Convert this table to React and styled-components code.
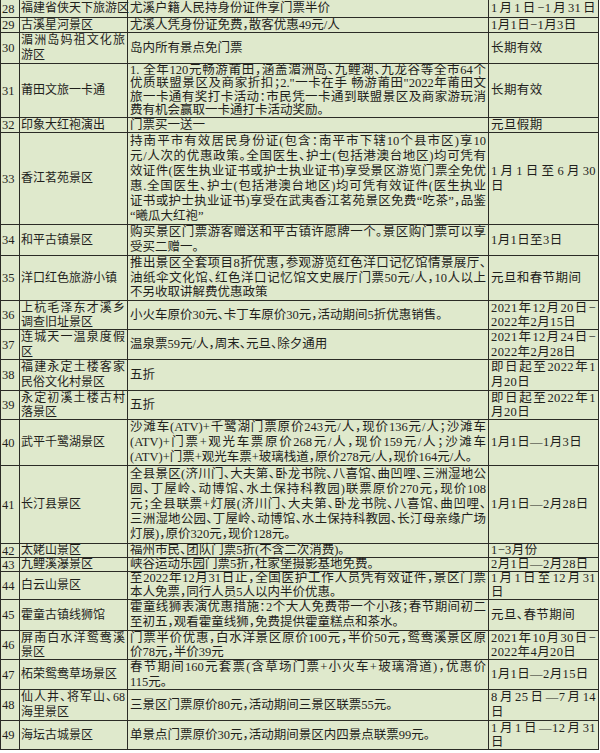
import React from "react";
import styled, { createGlobalStyle } from "styled-components";

const GlobalStyle = createGlobalStyle`
  body {
    margin: 0;
    background: #ffffff;
  }
`;

const rows = [
  { no: 28, h: 18, name: ["福建省侠天下旅游区"], info: ["尤溪户籍人民持身份证件享门票半价"], date: ["1月1日−1月31日"], fillDate: true },
  { no: 29, h: 15, name: ["古溪星河景区"], info: ["尤溪人凭身份证免费，散客优惠49元/人"], date: ["1月1日−1月3日"] },
  { no: 30, h: 31, name: ["湄洲岛妈祖文化旅", "游区"], info: ["岛内所有景点免门票"], date: ["长期有效"] },
  {
    no: 31, h: 54, name: ["莆田文旅一卡通"],
    info: [
      "1. 全年120元畅游莆田，涵盖湄洲岛、九鲤湖、九龙谷等全市64个",
      "优质联盟景区及商家折扣；2.\"一卡在手 畅游莆田\"2022年莆田文",
      "旅一卡通有奖打卡活动：市民凭一卡通到联盟景区及商家游玩消",
      "费有机会赢取一卡通打卡活动奖励。",
    ],
    date: ["长期有效"],
  },
  { no: 32, h: 15, name: ["印象大红袍演出"], info: ["门票买一送一"], date: ["元旦假期"] },
  {
    no: 33, h: 92, name: ["香江茗苑景区"],
    info: [
      "持南平市有效居民身份证(包含：南平市下辖10个县市区)享10",
      "元/人次的优惠政策。全国医生、护士(包括港澳台地区)均可凭有",
      "效证件(医生执业证书或护士执业证书)享受景区游览门票全免优",
      "惠.全国医生、护士(包括港澳台地区)均可凭有效证件(医生执业",
      "证书或护士执业证书)享受在武夷香江茗苑景区免费“吃茶”，品鉴",
      "“曦瓜大红袍”",
    ],
    date: ["1月1日至6月30", "日"],
  },
  {
    no: 34, h: 31, name: ["和平古镇景区"],
    info: ["购买景区门票游客赠送和平古镇许愿牌一个。景区购门票可以享", "受买二赠一。"],
    date: ["1月1日至3日"],
  },
  {
    no: 35, h: 45, name: ["洋口红色旅游小镇"],
    info: [
      "推出景区全套项目8折优惠，参观游览红色洋口记忆馆情景展厅、",
      "油纸伞文化馆、红色洋口记忆馆文史展厅门票50元/人，10人以上",
      "不另收取讲解费优惠政策",
    ],
    date: ["元旦和春节期间"],
  },
  {
    no: 36, h: 29, name: ["上杭毛泽东才溪乡", "调查旧址景区"],
    info: ["小火车原价30元、卡丁车原价30元，活动期间5折优惠销售。"],
    date: ["2021年12月20日−", "2022年2月15日"],
  },
  {
    no: 37, h: 30, name: ["连城天一温泉度假", "区"],
    info: ["温泉票59元/人，周末、元旦、除夕通用"],
    date: ["2021年12月24日−", "2022年2月28日"],
  },
  { no: 38, h: 31, name: ["福建永定土楼客家", "民俗文化村景区"], info: ["五折"], date: ["即日起至2022年1", "月20日"] },
  { no: 39, h: 29, name: ["永定初溪土楼古村", "落景区"], info: ["五折"], date: ["即日起至2022年1", "月20日"] },
  {
    no: 40, h: 46, name: ["武平千鹭湖景区"],
    info: [
      "沙滩车(ATV)+千鹭湖门票原价243元/人，现价136元/人；沙滩车",
      "(ATV)+门票+观光车票原价268元/人，现价159元/人；沙滩车",
      "(ATV)+门票+观光车票+玻璃栈道，原价278元/人，现价164元/人。",
    ],
    date: ["1月1日—1月3日"],
  },
  {
    no: 41, h: 78, name: ["长汀县景区"],
    info: [
      "全县景区(济川门、大夫第、卧龙书院、八喜馆、曲凹哩、三洲湿地公",
      "园、丁屋岭、动博馆、水土保持科教园)联票原价270元，现价108",
      "元；全县联票+灯展(济川门、大夫第、卧龙书院、八喜馆、曲凹哩、",
      "三洲湿地公园、丁屋岭、动博馆、水土保持科教园、长汀母亲缘广场",
      "灯展)，原价320元，现价128元。",
    ],
    date: ["1月1日—2月28日"],
  },
  { no: 42, h: 14, name: ["太姥山景区"], info: ["福州市民、团队门票5折(不含二次消费)。"], date: ["1−3月份"] },
  { no: 43, h: 14, name: ["九鲤溪瀑景区"], info: ["峡谷运动乐园门票5折，杜家堡摄影基地免费。"], date: ["2月1日—2月28日"] },
  {
    no: 44, h: 28, name: ["白云山景区"],
    info: ["至2022年12月31日止，全国医护工作人员凭有效证件，景区门票", "本人免票，同行人员5人以内半价优惠。"],
    date: ["1月1日至12月31", "日"],
  },
  {
    no: 45, h: 31, name: ["霍童古镇线狮馆"],
    info: ["霍童线狮表演优惠措施：2个大人免费带一个小孩；春节期间初二", "至初五，观看霍童线狮，免费提供霍童糕点和茶水。"],
    date: ["元旦、春节期间"],
  },
  {
    no: 46, h: 29, name: ["屏南白水洋鸳鸯溪", "景区"],
    info: ["门票半价优惠，白水洋景区原价100元，半价50元，鸳鸯溪景区原", "价78元，半价39元"],
    date: ["2021年10月30日−", "2022年4月20日"],
  },
  {
    no: 47, h: 30, name: ["柘荣鸳鸯草场景区"],
    info: ["春节期间160元套票(含草场门票+小火车+玻璃滑道)，优惠价", "115元。"],
    date: ["1月1日—2月15日"],
  },
  {
    no: 48, h: 31, name: ["仙人井、将军山、68", "海里景区"],
    info: ["三景区门票原价80元，活动期间三景区联票55元。"],
    date: ["8月25日—7月14", "日"],
  },
  {
    no: 49, h: 29, name: ["海坛古城景区"],
    info: ["单景点门票原价30元，活动期间景区内四景点联票99元。"],
    date: ["1月1日—12月31", "日"],
  },
];

const Sheet = styled.div`
  width: 599px;
  box-sizing: border-box;
  border-left: 1px solid #2b2b26;
  background: #dfe9cc;
  color: #1f1f1c;
  font-family: "Liberation Serif", "Noto Sans CJK SC", serif;
  font-feature-settings: "halt" 1;
`;

const Row = styled.div`
  display: grid;
  grid-template-columns: 19px 108px 361px 110px;
  box-sizing: border-box;
  height: ${(p) => p.$h}px;
  line-height: ${(p) => p.$lh}px;
  border-bottom: 1px solid #2b2b26;
`;

const Cell = styled.div`
  display: flex;
  flex-direction: column;
  justify-content: center;
  min-width: 0;
  border-right: 1px solid #2b2b26;
  padding: 0 2px;
`;

const NoCell = styled(Cell)`
  padding: 0 0 0 1px;
  font-size: 12.5px;
  line-height: 12px;
`;

const NameCell = styled(Cell)`
  padding: 0 2px 0 1px;
  font-size: 12px;
`;

const InfoCell = styled(Cell)`
  font-size: 12.5px;
`;

const DateCell = styled(Cell)`
  font-size: 12.5px;
  letter-spacing: 0.4px;
`;

const Line = styled.span`
  display: block;
  text-align: ${(p) => (p.$fill ? "justify" : "left")};
  text-align-last: ${(p) => (p.$fill ? "justify" : "auto")};
  white-space: ${(p) => (p.$fill ? "normal" : "nowrap")};
`;

const Lines = ({ items, fillLast }) =>
  items.map((t, i) => (
    <Line key={i} $fill={i < items.length - 1 || fillLast}>
      {t}
    </Line>
  ));

export default function App() {
  return (
    <>
      <GlobalStyle />
      <Sheet>
        {rows.map((r) => {
          const most = Math.max(r.name.length, r.info.length, r.date.length);
          const lh = Math.min(15, (r.h - 1) / most);
          return (
            <Row key={r.no} $h={r.h} $lh={lh}>
              <NoCell>{r.no}</NoCell>
              <NameCell>
                <Lines items={r.name} />
              </NameCell>
              <InfoCell>
                <Lines items={r.info} />
              </InfoCell>
              <DateCell>
                <Lines items={r.date} fillLast={r.fillDate} />
              </DateCell>
            </Row>
          );
        })}
      </Sheet>
    </>
  );
}
